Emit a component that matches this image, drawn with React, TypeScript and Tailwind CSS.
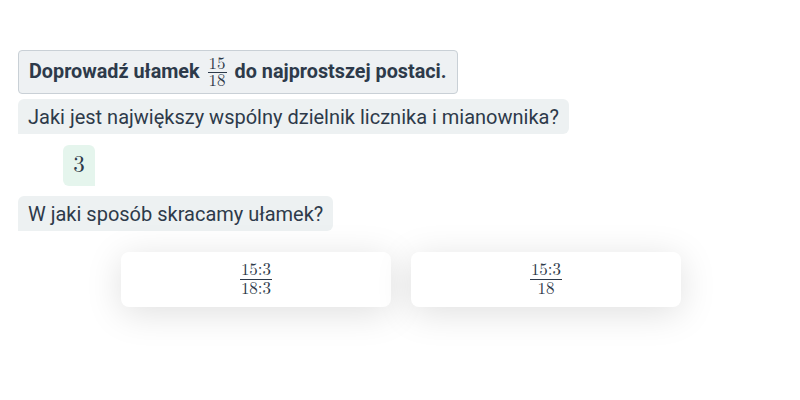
import React from 'react';

const mathFont = { fontFamily: '"Latin Modern Math", "DejaVu Serif", "Liberation Serif", serif' };

function Frac({ num, den, small }: { num: string; den: string; small?: boolean }) {
  return (
    <span
      className={`inline-flex flex-col items-center align-middle ${small ? 'mx-[8px] text-[17px] leading-[16px]' : 'text-[17px] leading-[18px]'}`}
      style={mathFont}
    >
      <span className="px-[1px] font-normal">{num}</span>
      <span className="block w-full h-px bg-[#2d3a4a]"></span>
      <span className="px-[1px] font-normal">{den}</span>
    </span>
  );
}

function Bubble({ children }: { children: React.ReactNode }) {
  return (
    <div className="self-start bg-[#edf1f2] rounded-md rounded-bl-none px-[10px] h-[35px] flex items-center text-[20px]">
      {children}
    </div>
  );
}

export default function App() {
  return (
    <div
      className="w-[800px] h-[400px] bg-white text-[#2d3a4a] pt-[50px] pl-[18px] flex flex-col"
      style={{ fontFamily: 'Roboto, "Liberation Sans", sans-serif' }}
    >
      <div className="self-start bg-[#eef1f3] border border-[#c9d0d6] rounded-[4px] h-[44px] px-[10px] flex items-center text-[19.8px] font-bold">
        Doprowadź ułamek <Frac num="15" den="18" small /> do najprostszej postaci.
      </div>

      <div className="mt-[5px] flex flex-col">
        <Bubble>Jaki jest największy wspólny dzielnik licznika i mianownika?</Bubble>
      </div>

      <div className="mt-[11px] ml-[45px] self-start bg-[#e5f5ed] rounded-md rounded-br-none w-[32px] h-[41px] flex items-center justify-center text-[23px]" style={mathFont}>
        3
      </div>

      <div className="mt-[10px] flex flex-col">
        <Bubble>W jaki sposób skracamy ułamek?</Bubble>
      </div>

      <div className="mt-[21px] -ml-[16px] flex justify-center gap-[20px]">
        <div className="w-[270px] h-[55px] bg-white rounded-lg shadow-[0_6px_36px_rgba(0,0,0,0.13)] flex items-center justify-center">
          <Frac num="15:3" den="18:3" />
        </div>
        <div className="w-[270px] h-[55px] bg-white rounded-lg shadow-[0_6px_36px_rgba(0,0,0,0.13)] flex items-center justify-center">
          <Frac num="15:3" den="18" />
        </div>
      </div>
    </div>
  );
}
